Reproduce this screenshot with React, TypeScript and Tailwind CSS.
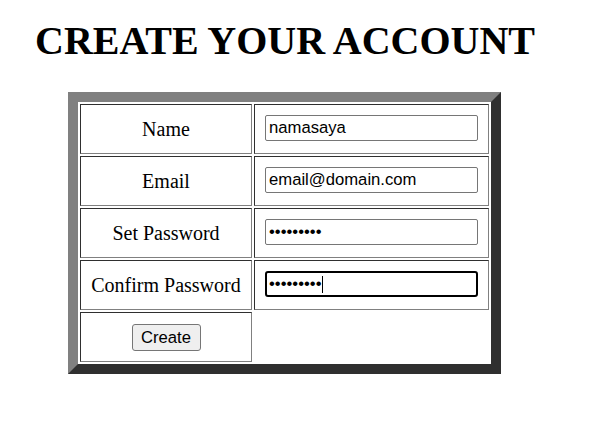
import React from "react";

const cell =
  "flex h-[50px] items-center border border-t-[#2f2f2f] border-l-[#2f2f2f] border-r-[#808080] border-b-[#808080]";

const labelCls = `${cell} justify-center font-['Liberation_Serif',serif] text-[20px] text-black`;

const fieldCell = `${cell} pl-[10px] pb-[2px]`;

const inputCls =
  "h-[26px] w-[213px] rounded-[2px] border border-[#767676] bg-white px-[3px] font-['Liberation_Sans',Arial,sans-serif] text-[16.67px] text-black outline-none";

export default function App() {
  return (
    <div className="min-h-[421px] w-[599px] bg-white">
      <h1 className="pl-[35px] pt-[21px] font-['Liberation_Serif',serif] text-[40px] font-bold leading-[40px] text-black">
        CREATE YOUR ACCOUNT
      </h1>

      <form
        className="ml-[68px] mt-[31px] w-[433px] border-[10px] border-t-[#808080] border-l-[#808080] border-r-[#2f2f2f] border-b-[#2f2f2f]"
        onSubmit={(e) => e.preventDefault()}
      >
        <div className="grid grid-cols-[172px_235px] gap-[2px] bg-white p-[2px]">
          <div className={labelCls}>Name</div>
          <div className={fieldCell}>
            <input type="text" defaultValue="namasaya" className={inputCls} />
          </div>

          <div className={labelCls}>Email</div>
          <div className={fieldCell}>
            <input type="email" defaultValue="email@domain.com" className={inputCls} />
          </div>

          <div className={labelCls}>Set Password</div>
          <div className={fieldCell}>
            <input type="password" defaultValue="123456789" className={inputCls} />
          </div>

          <div className={labelCls}>Confirm Password</div>
          <div className={fieldCell}>
            <div className="relative">
              <input
                type="password"
                defaultValue="123456789"
                className="h-[26px] w-[213px] rounded-[3px] border-2 border-black bg-white px-[2px] font-['Liberation_Sans',Arial,sans-serif] text-[16.67px] text-black outline-none"
              />
              <span className="absolute left-[57px] top-[5px] h-[17px] w-px bg-black" />
            </div>
          </div>

          <div className={`${cell} justify-center`}>
            <button
              type="submit"
              className="h-[27px] w-[69px] rounded-[3px] border border-[#767676] bg-[#efefef] font-['Liberation_Sans',Arial,sans-serif] text-[16.67px] text-black"
            >
              Create
            </button>
          </div>
          <div />
        </div>
      </form>
    </div>
  );
}
